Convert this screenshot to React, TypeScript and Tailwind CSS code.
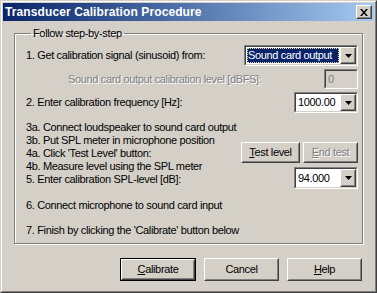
import React from "react";

const raised =
  "border border-t-white border-l-white border-r-[#404040] border-b-[#404040]";
const raisedInner = "border border-t-[#d4d0c8] border-l-[#d4d0c8] border-r-[#808080] border-b-[#808080]";
const sunken = "border border-t-[#808080] border-l-[#808080] border-r-white border-b-white";
const sunkenInner = "border border-t-[#404040] border-l-[#404040] border-r-[#d4d0c8] border-b-[#d4d0c8]";

function Arrow() {
  return (
    <svg width="7" height="4" viewBox="0 0 7 4">
      <path d="M0 0h7L3.5 4z" fill="#000" />
    </svg>
  );
}

function Combo({ value, w, h, focused }: { value: string; w: string; h: string; focused?: boolean }) {
  return (
    <div className={`${sunken} ${w} ${h} shrink-0`}>
      <div className={`${sunkenInner} h-full flex bg-white`}>
        <div className="flex-1 flex items-center p-px min-w-0">
          {focused ? (
            <div className="h-full w-full bg-[#0a246a] text-white outline-1 outline-dotted outline-[#f5db95] -outline-offset-1 flex items-center pl-[1px] whitespace-nowrap overflow-hidden">
              {value}
            </div>
          ) : (
            <span className="pl-[1px] whitespace-nowrap">{value}</span>
          )}
        </div>
        <div className={`${raised} w-[16px] h-full bg-[#d4d0c8]`}>
          <div className={`${raisedInner} h-full flex items-center justify-center`}>
            <Arrow />
          </div>
        </div>
      </div>
    </div>
  );
}

function Btn({
  children,
  w,
  h,
  def,
  disabled,
}: {
  children: React.ReactNode;
  w: string;
  h: string;
  def?: boolean;
  disabled?: boolean;
}) {
  const inner = (
    <div className={`${raised} h-full bg-[#d4d0c8]`}>
      <div
        className={`${raisedInner} h-full flex items-center justify-center ${
          disabled ? "text-[#808080] [text-shadow:1px_1px_0_#fff]" : "text-black"
        }`}
      >
        {children}
      </div>
    </div>
  );
  return def ? (
    <div className={`border border-black ${w} ${h}`}>{inner}</div>
  ) : (
    <div className={`${w} ${h}`}>{inner}</div>
  );
}

export default function App() {
  return (
    <div className="w-[377px] h-[293px] font-['Liberation_Sans',Arial,sans-serif] text-[11px] tracking-[-0.35px] text-black select-none whitespace-nowrap">
      {/* Window frame */}
      <div className="w-full h-full border border-t-[#d4d0c8] border-l-[#d4d0c8] border-r-[#404040] border-b-[#404040]">
        <div className="w-full h-full border border-t-white border-l-white border-r-[#808080] border-b-[#808080] bg-[#d4d0c8] p-px flex flex-col">
          {/* Title bar */}
          <div className="h-[18px] shrink-0 flex items-center bg-gradient-to-r from-[#0a246a] to-[#a6caf0] pl-[2px] pr-[2px]">
            <span className="flex-1 text-white font-bold text-[12px] leading-none tracking-[0.1px]">
              Transducer Calibration Procedure
            </span>
            <div className={`${raised} w-[16px] h-[14px] bg-[#d4d0c8]`}>
              <div className={`${raisedInner} h-full flex items-center justify-center`}>
                <svg width="8" height="7" viewBox="0 0 8 7">
                  <path d="M0 0h2l2 2.5L6 0h2L5 3.5 8 7H6L4 4.5 2 7H0l3-3.5z" fill="#000" />
                </svg>
              </div>
            </div>
          </div>

          {/* Body */}
          <div className="flex-1 flex flex-col pl-[11px] pr-[11px] pt-[6px]">
            <fieldset className="border border-[#808080] shadow-[inset_1px_1px_0_#fff,1px_1px_0_#fff] h-[217px] w-[349px] pl-[11px] pr-[4px] m-0 shrink-0">
              <legend className="ml-[5px] px-[2px] leading-[13px]">Follow step-by-step</legend>

              <div className="flex flex-col mt-[5px]">
                <div className="flex items-center justify-between h-[21px]">
                  <span>1. Get calibration signal (sinusoid) from:</span>
                  <Combo value="Sound card output" w="w-[114px]" h="h-[21px]" focused />
                </div>

                <div className="flex items-center justify-between h-[20px] mt-[3px]">
                  <span className="pl-[42px] text-[#808080] [text-shadow:1px_1px_0_#fff]">
                    Sound card output calibration level [dBFS]:
                  </span>
                  <div className={`${sunken} w-[34px] h-[20px]`}>
                    <div className={`${sunkenInner} h-full flex items-center pl-[2px] text-[#808080]`}>0</div>
                  </div>
                </div>

                <div className="flex items-center justify-between h-[21px] mt-[3px]">
                  <span>2. Enter calibration frequency [Hz]:</span>
                  <Combo value="1000.00" w="w-[64px]" h="h-[21px]" />
                </div>

                <div className="flex justify-between mt-[8px]">
                  <div className="flex flex-col leading-[13px] min-w-0">
                    <span>3a. Connect loudspeaker to sound card output</span>
                    <span>3b. Put SPL meter in microphone position</span>
                    <span>4a. Click 'Test Level' button:</span>
                    <span>4b. Measure level using the SPL meter</span>
                    <span>5. Enter calibration SPL-level [dB]:</span>
                  </div>
                  <div className="flex flex-col items-end pt-[21px] gap-[4px] shrink-0">
                    <div className="flex gap-[3px]">
                      <Btn w="w-[59px]" h="h-[21px]">
                        <span>
                          <u>T</u>est level
                        </span>
                      </Btn>
                      <Btn w="w-[55px]" h="h-[21px]" disabled>
                        <span>
                          <u>E</u>nd test
                        </span>
                      </Btn>
                    </div>
                    <Combo value="94.000" w="w-[64px]" h="h-[22px]" />
                  </div>
                </div>

                <div className="leading-[13px] mt-[10px]">6. Connect microphone to sound card input</div>
                <div className="leading-[13px] mt-[12px]">7. Finish by clicking the 'Calibrate' button below</div>
              </div>
            </fieldset>

            <div className="flex justify-end gap-[8px] mt-[14px] pr-[1px]">
              <Btn w="w-[76px]" h="h-[23px]" def>
                <span>
                  <u>C</u>alibrate
                </span>
              </Btn>
              <Btn w="w-[75px]" h="h-[23px]">
                <span>Cancel</span>
              </Btn>
              <Btn w="w-[75px]" h="h-[23px]">
                <span>
                  <u>H</u>elp
                </span>
              </Btn>
            </div>
          </div>
        </div>
      </div>
    </div>
  );
}
